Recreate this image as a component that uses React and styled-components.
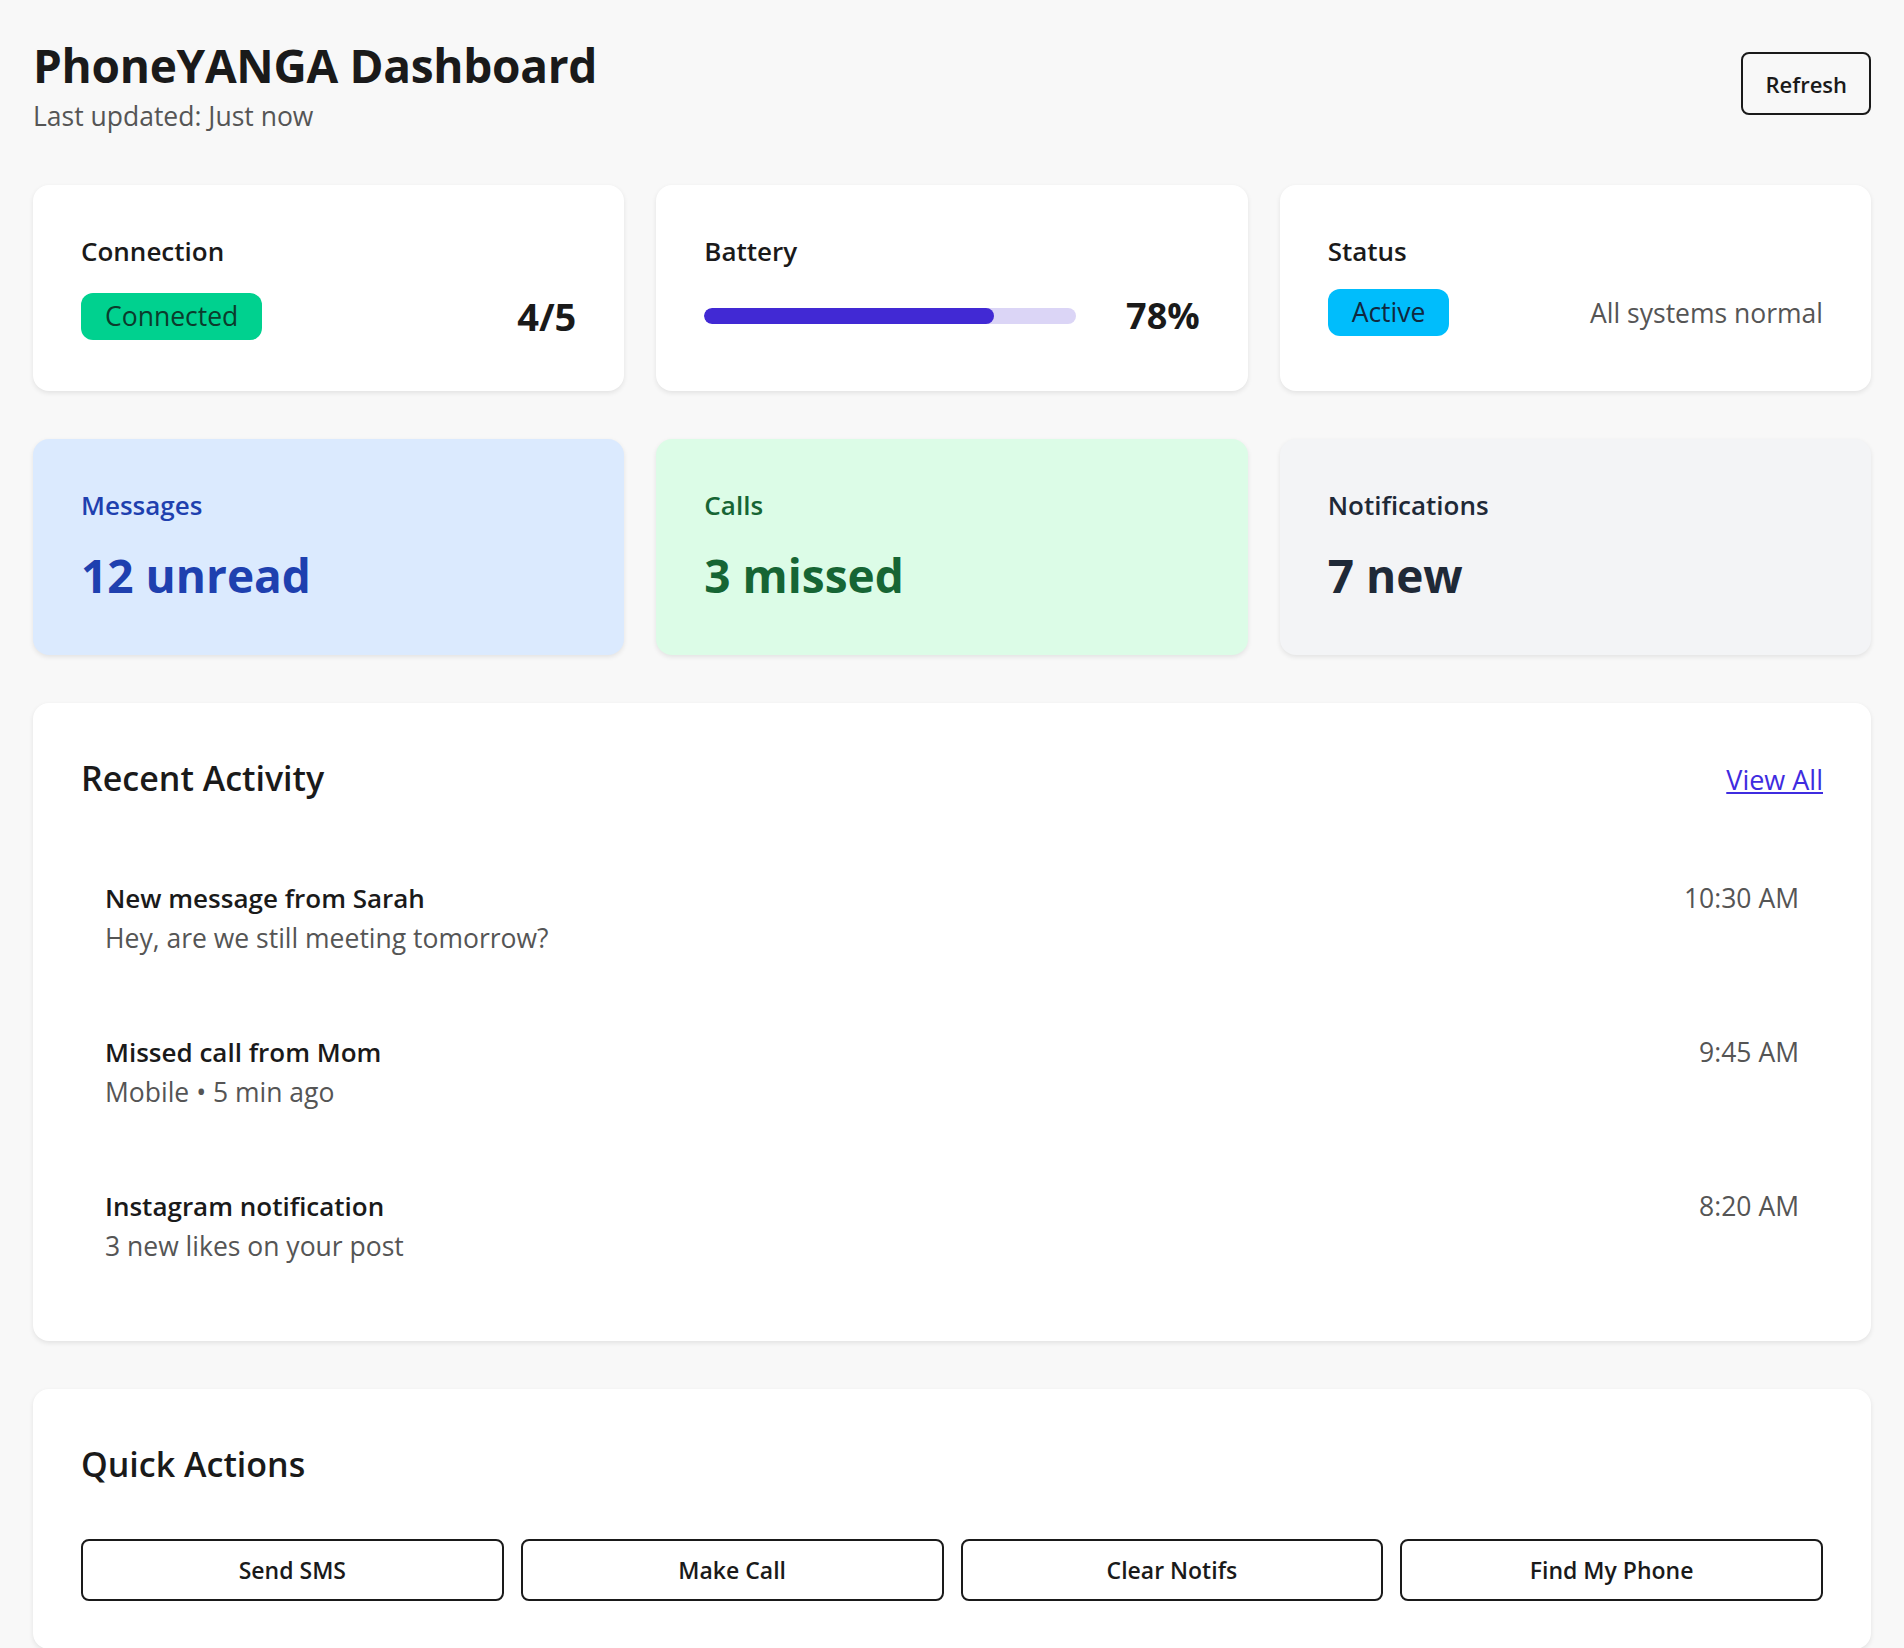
import React from 'react'
import styled, { createGlobalStyle } from 'styled-components'

const GlobalStyle = createGlobalStyle`
    * { box-sizing: border-box; }
    body {
        margin: 0;
        background: #f8f8f8;
        color: #1a1a1a;
        font-family: "Open Sans", "Noto Sans", sans-serif;
    }
`

const Page = styled.div`
    padding: 38px 33px 0;
`

const Header = styled.header`
    display: flex;
    justify-content: space-between;
    align-items: flex-start;
    margin-bottom: 50px;
`

const Title = styled.h1`
    margin: 0;
    font-size: 46px;
    font-weight: 700;
    line-height: 1.2;
    letter-spacing: -0.3px;
`

const Updated = styled.div`
    font-size: 26.5px;
    color: #555;
    line-height: 1.4;
    margin-top: 5px;
`

const OutlineButton = styled.button`
    font-family: inherit;
    font-size: ${p => p.small ? '23px' : '22px'};
    font-weight: 600;
    color: #1a1a1a;
    background: transparent;
    border: 2px solid #1a1a1a;
    border-radius: 8px;
    height: ${p => p.small ? '62px' : '63px'};
    margin-top: ${p => p.small ? '0' : '14px'};
    padding: 0 22px;
    cursor: pointer;
`

const Grid = styled.div`
    display: grid;
    grid-template-columns: repeat(3, 1fr);
    gap: 32px;
    margin-bottom: 48px;
`

const Card = styled.div`
    background: ${p => p.bg || '#fff'};
    border-radius: 16px;
    padding: 48px 48px ${p => p.bottom || '48px'};
    box-shadow: 0 2px 5px rgba(0, 0, 0, 0.09);
    margin-bottom: ${p => p.gapBelow || '0'};
`

const CardLabel = styled.div`
    font-size: 26px;
    font-weight: 600;
    line-height: 36px;
    color: ${p => p.color || '#1a1a1a'};
    margin-bottom: ${p => p.space || '20px'};
`

const Row = styled.div`
    display: flex;
    justify-content: space-between;
    align-items: center;
`

const Badge = styled.span`
    display: inline-block;
    font-size: 26.5px;
    line-height: 35px;
    padding: 6px 24px;
    border-radius: 12px;
    background: ${p => p.bg};
    color: ${p => p.fg};
`

const BigValue = styled.div`
    font-size: ${p => p.size || '38px'};
    font-weight: 700;
    line-height: 54px;
`

const Track = styled.div`
    width: 75%;
    height: 16px;
    border-radius: 8px;
    background: #dbd5f6;
    overflow: hidden;
`

const Fill = styled.div`
    height: 100%;
    border-radius: 8px;
    background: #4129d4;
`

const Muted = styled.span`
    font-size: 26.5px;
    color: #555;
`

const StatValue = styled.div`
    font-size: 46px;
    font-weight: 700;
    line-height: 64px;
    color: ${p => p.color};
`

const SectionHead = styled.div`
    display: flex;
    justify-content: space-between;
    align-items: center;
    padding-top: 5px;
    margin-bottom: 52px;
`

const SectionTitle = styled.h2`
    margin: 0;
    font-size: 34px;
    font-weight: 600;
    line-height: 1.34;
`

const Link = styled.a`
    font-size: 27px;
    color: #3f2ce0;
    text-decoration: underline;
    cursor: pointer;
`

const ActivityList = styled.div`
    display: flex;
    flex-direction: column;
    gap: 26px;
`

const ActivityItem = styled.div`
    display: flex;
    justify-content: space-between;
    align-items: flex-start;
    padding: 26px 24px;
`

const ItemTitle = styled.div`
    font-size: 26px;
    font-weight: 600;
    line-height: 36px;
`

const ItemSub = styled.div`
    font-size: 26.5px;
    line-height: 36px;
    color: #555;
    margin-top: 4px;
`

const ItemTime = styled.div`
    font-size: 26.5px;
    line-height: 36px;
    color: #555;
`

const Actions = styled.div`
    display: grid;
    grid-template-columns: repeat(4, 1fr);
    gap: 17px;
`

const stats = [
    { label: 'Messages', value: '12 unread', bg: '#dbeafe', color: '#1e40af' },
    { label: 'Calls', value: '3 missed', bg: '#dcfce7', color: '#166534' },
    { label: 'Notifications', value: '7 new', bg: '#f3f4f6', color: '#1f2937' },
]

const activity = [
    { title: 'New message from Sarah', sub: 'Hey, are we still meeting tomorrow?', time: '10:30 AM' },
    { title: 'Missed call from Mom', sub: 'Mobile • 5 min ago', time: '9:45 AM' },
    { title: 'Instagram notification', sub: '3 new likes on your post', time: '8:20 AM' },
]

const actions = ['Send SMS', 'Make Call', 'Clear Notifs', 'Find My Phone']

export default function App() {
    const battery = 78

    return (
        <Page>
            <GlobalStyle />
            <Header>
                <div>
                    <Title>PhoneYANGA Dashboard</Title>
                    <Updated>Last updated: Just now</Updated>
                </div>
                <OutlineButton>Refresh</OutlineButton>
            </Header>

            <Grid>
                <Card>
                    <CardLabel>Connection</CardLabel>
                    <Row>
                        <Badge bg="#00d18f" fg="#0b3b2c">Connected</Badge>
                        <BigValue>4/5</BigValue>
                    </Row>
                </Card>
                <Card>
                    <CardLabel>Battery</CardLabel>
                    <Row>
                        <Track>
                            <Fill style={{ width: `${battery}%` }} />
                        </Track>
                        <BigValue size="36px">{battery}%</BigValue>
                    </Row>
                </Card>
                <Card>
                    <CardLabel>Status</CardLabel>
                    <Row>
                        <Badge bg="#00bdfc" fg="#10283f">Active</Badge>
                        <Muted>All systems normal</Muted>
                    </Row>
                </Card>
            </Grid>

            <Grid>
                {stats.map(s => (
                    <Card key={s.label} bg={s.bg}>
                        <CardLabel color={s.color}>{s.label}</CardLabel>
                        <StatValue color={s.color}>{s.value}</StatValue>
                    </Card>
                ))}
            </Grid>

            <Card gapBelow="48px" bottom="51px">
                <SectionHead>
                    <SectionTitle>Recent Activity</SectionTitle>
                    <Link>View All</Link>
                </SectionHead>
                <ActivityList>
                    {activity.map(a => (
                        <ActivityItem key={a.title}>
                            <div>
                                <ItemTitle>{a.title}</ItemTitle>
                                <ItemSub>{a.sub}</ItemSub>
                            </div>
                            <ItemTime>{a.time}</ItemTime>
                        </ActivityItem>
                    ))}
                </ActivityList>
            </Card>

            <Card>
                <SectionHead>
                    <SectionTitle>Quick Actions</SectionTitle>
                </SectionHead>
                <Actions>
                    {actions.map(a => (
                        <OutlineButton key={a} small>{a}</OutlineButton>
                    ))}
                </Actions>
            </Card>
        </Page>
    )
}
